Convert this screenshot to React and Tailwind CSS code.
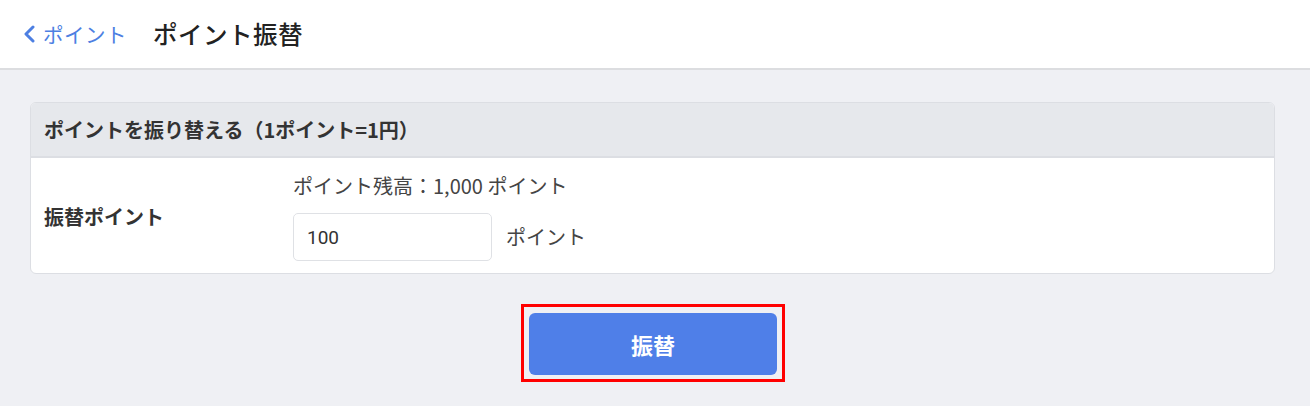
export default function App() {
  return (
    <div
      className="min-h-[406px] bg-[#eff0f4] text-[#333333]"
      style={{ fontFamily: '"Noto Sans CJK JP", "Noto Sans", sans-serif' }}
    >
      {/* HEADER */}
      <div className="h-[70px] bg-white border-b-2 border-[#dcdde0] flex items-center">
        <a className="flex items-center ml-[22px] text-[#4d7fe2] text-[20.5px] tracking-[0.5px]" href="#">
          <svg width="14" height="18" viewBox="0 0 14 18" className="mr-[7px]">
            <polyline
              points="11,2 4,9 11,16"
              fill="none"
              stroke="#4d7fe2"
              strokeWidth="3"
              strokeLinecap="round"
              strokeLinejoin="round"
            />
          </svg>
          ポイント
        </a>
        <h1 className="ml-[26px] text-[24.5px] font-medium text-[#222222] tracking-[0.5px]">ポイント振替</h1>
      </div>

      {/* CONTENT */}
      <div className="pt-[32px] pb-[24px]">
        <div className="ml-[30px] mr-[35px] bg-white border border-[#dcdee3] rounded-[6px] overflow-hidden">
          <div className="h-[55px] bg-[#e6e8ec] border-b-2 border-[#dcdee3] flex items-center px-[13px]">
            <h2 className="text-[20px] font-bold">ポイントを振り替える（1ポイント=1円）</h2>
          </div>
          <div className="flex items-center pt-[15px] pb-[12px]">
            <div className="w-[262px] pl-[13px] text-[20px] font-bold">振替ポイント</div>
            <div className="flex flex-col">
              <div className="text-[20px] leading-[26px] text-[#444444]">
                ポイント残高：1,000 ポイント
              </div>
              <div className="flex items-center mt-[14px]">
                <input
                  className="w-[199px] h-[48px] border border-[#dfe1e5] rounded-[5px] px-[13px] text-[19px] font-normal text-[#333333] outline-none"
                  style={{ fontFamily: 'Roboto, "Noto Sans CJK JP", sans-serif' }}
                  defaultValue="100"
                />
                <span className="ml-[14px] text-[20px] text-[#444444]">ポイント</span>
              </div>
            </div>
          </div>
        </div>

        <div className="flex justify-center mt-[30px]">
          <div className="border-[3px] border-[#ff0000] p-[5px] pt-[6px] pb-[4px] ml-[-4px]">
            <button className="w-[248px] h-[62px] bg-[#4f7fe8] rounded-[6px] text-white text-[22px] font-bold">
              振替
            </button>
          </div>
        </div>
      </div>
    </div>
  );
}
